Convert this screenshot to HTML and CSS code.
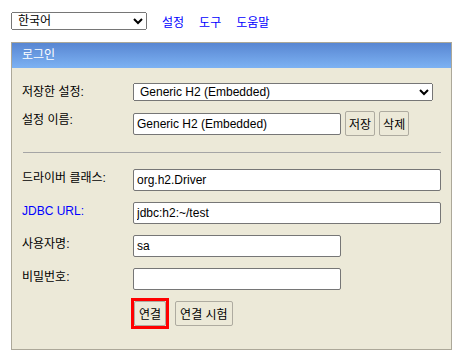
FILE: index.html
```html
<!DOCTYPE html>
<html lang="ko">
<head>
<meta charset="utf-8">
<title>H2 Console</title>
<link rel="stylesheet" href="styles.css">
</head>
<body>
<div class="topbar">
  <select class="lang"><option>한국어</option></select>
  <nav class="links"><a href="#">설정</a><a href="#">도구</a><a href="#">도움말</a></nav>
</div>
<div class="panel">
  <div class="panel-head">로그인</div>
  <div class="panel-body">
    <div class="grid">
      <label class="lbl">저장한 설정:</label>
      <select class="wide-select"><option>Generic H2 (Embedded)</option></select>
      <label class="lbl">설정 이름:</label>
      <div class="inline"><input class="field short" value="Generic H2 (Embedded)"><button class="btn">저장</button><button class="btn">삭제</button></div>
    </div>
    <hr class="sep">
    <div class="grid">
      <label class="lbl">드라이버 클래스:</label><input class="field long" value="org.h2.Driver">
      <label class="lbl link-label">JDBC URL:</label><input class="field long" value="jdbc:h2:~/test">
      <label class="lbl">사용자명:</label><input class="field short" value="sa">
      <label class="lbl">비밀번호:</label><input class="field short" type="password">
      <span></span><div class="actions"><span class="highlight"><button class="btn">연결</button></span><button class="btn">연결 시험</button></div>
    </div>
  </div>
</div>
</body>
</html>
```
FILE: styles.css
```css
* { box-sizing: border-box; }
body {
  margin: 0;
  padding: 12px 11px;
  background: #fff;
  font: 12px "Liberation Sans", "Noto Sans CJK KR", sans-serif;
  color: #000;
}
select, input, button {
  font: 12px "Liberation Sans", "Noto Sans CJK KR", sans-serif;
  color: #000;
}
.topbar {
  display: flex;
  align-items: center;
  height: 18px;
}
.lang {
  width: 136px;
  height: 18px;
  padding: 0 2px;
}
.links {
  display: flex;
  gap: 15px;
  margin-left: 15px;
}
.links a {
  color: #0000ff;
  text-decoration: none;
}
.panel {
  margin-top: 12px;
  width: 441px;
  background: #ece9d8;
  border: 1px solid #aca899;
}
.panel-head {
  height: 25px;
  line-height: 25px;
  padding-left: 10px;
  color: #fff;
  background: linear-gradient(#5886d2, #7db2f3);
}
.panel-body {
  padding: 15px 11px 20px 10px;
}
.grid {
  display: grid;
  grid-template-columns: 111px auto;
  row-gap: 11px;
  align-items: start;
}
.grid:first-child { row-gap: 10px; }
.lbl {
  line-height: 16px;
  padding-top: 1px;
}
.link-label { color: #0000ff; }
.wide-select {
  width: 300px;
  height: 18px;
  padding: 0 2px;
}
.inline {
  display: flex;
  align-items: center;
  gap: 4px;
}
.field {
  height: 22px;
  padding: 0 3px;
  border: 1px solid #767676;
  border-radius: 2px;
  background: #fff;
}
.short { width: 208px; }
.long { width: 308px; }
.btn {
  height: 25px;
  padding: 0 3px;
  background: #ece9d8;
  border: 1px solid #aeaba0;
  border-radius: 2px;
}
.sep {
  margin: 16px 0 16px 1px;
  border: 0;
  border-top: 1px solid #a5a5a5;
  width: 418px;
}
.actions {
  display: flex;
  align-items: center;
  gap: 6px;
  margin-top: -3px;
}
.highlight {
  display: flex;
  border: 3px solid #ff0000;
  margin-left: -2px;
}
.highlight .btn { padding: 0 4px; }
.actions > .btn { padding: 0 4px; }
```
